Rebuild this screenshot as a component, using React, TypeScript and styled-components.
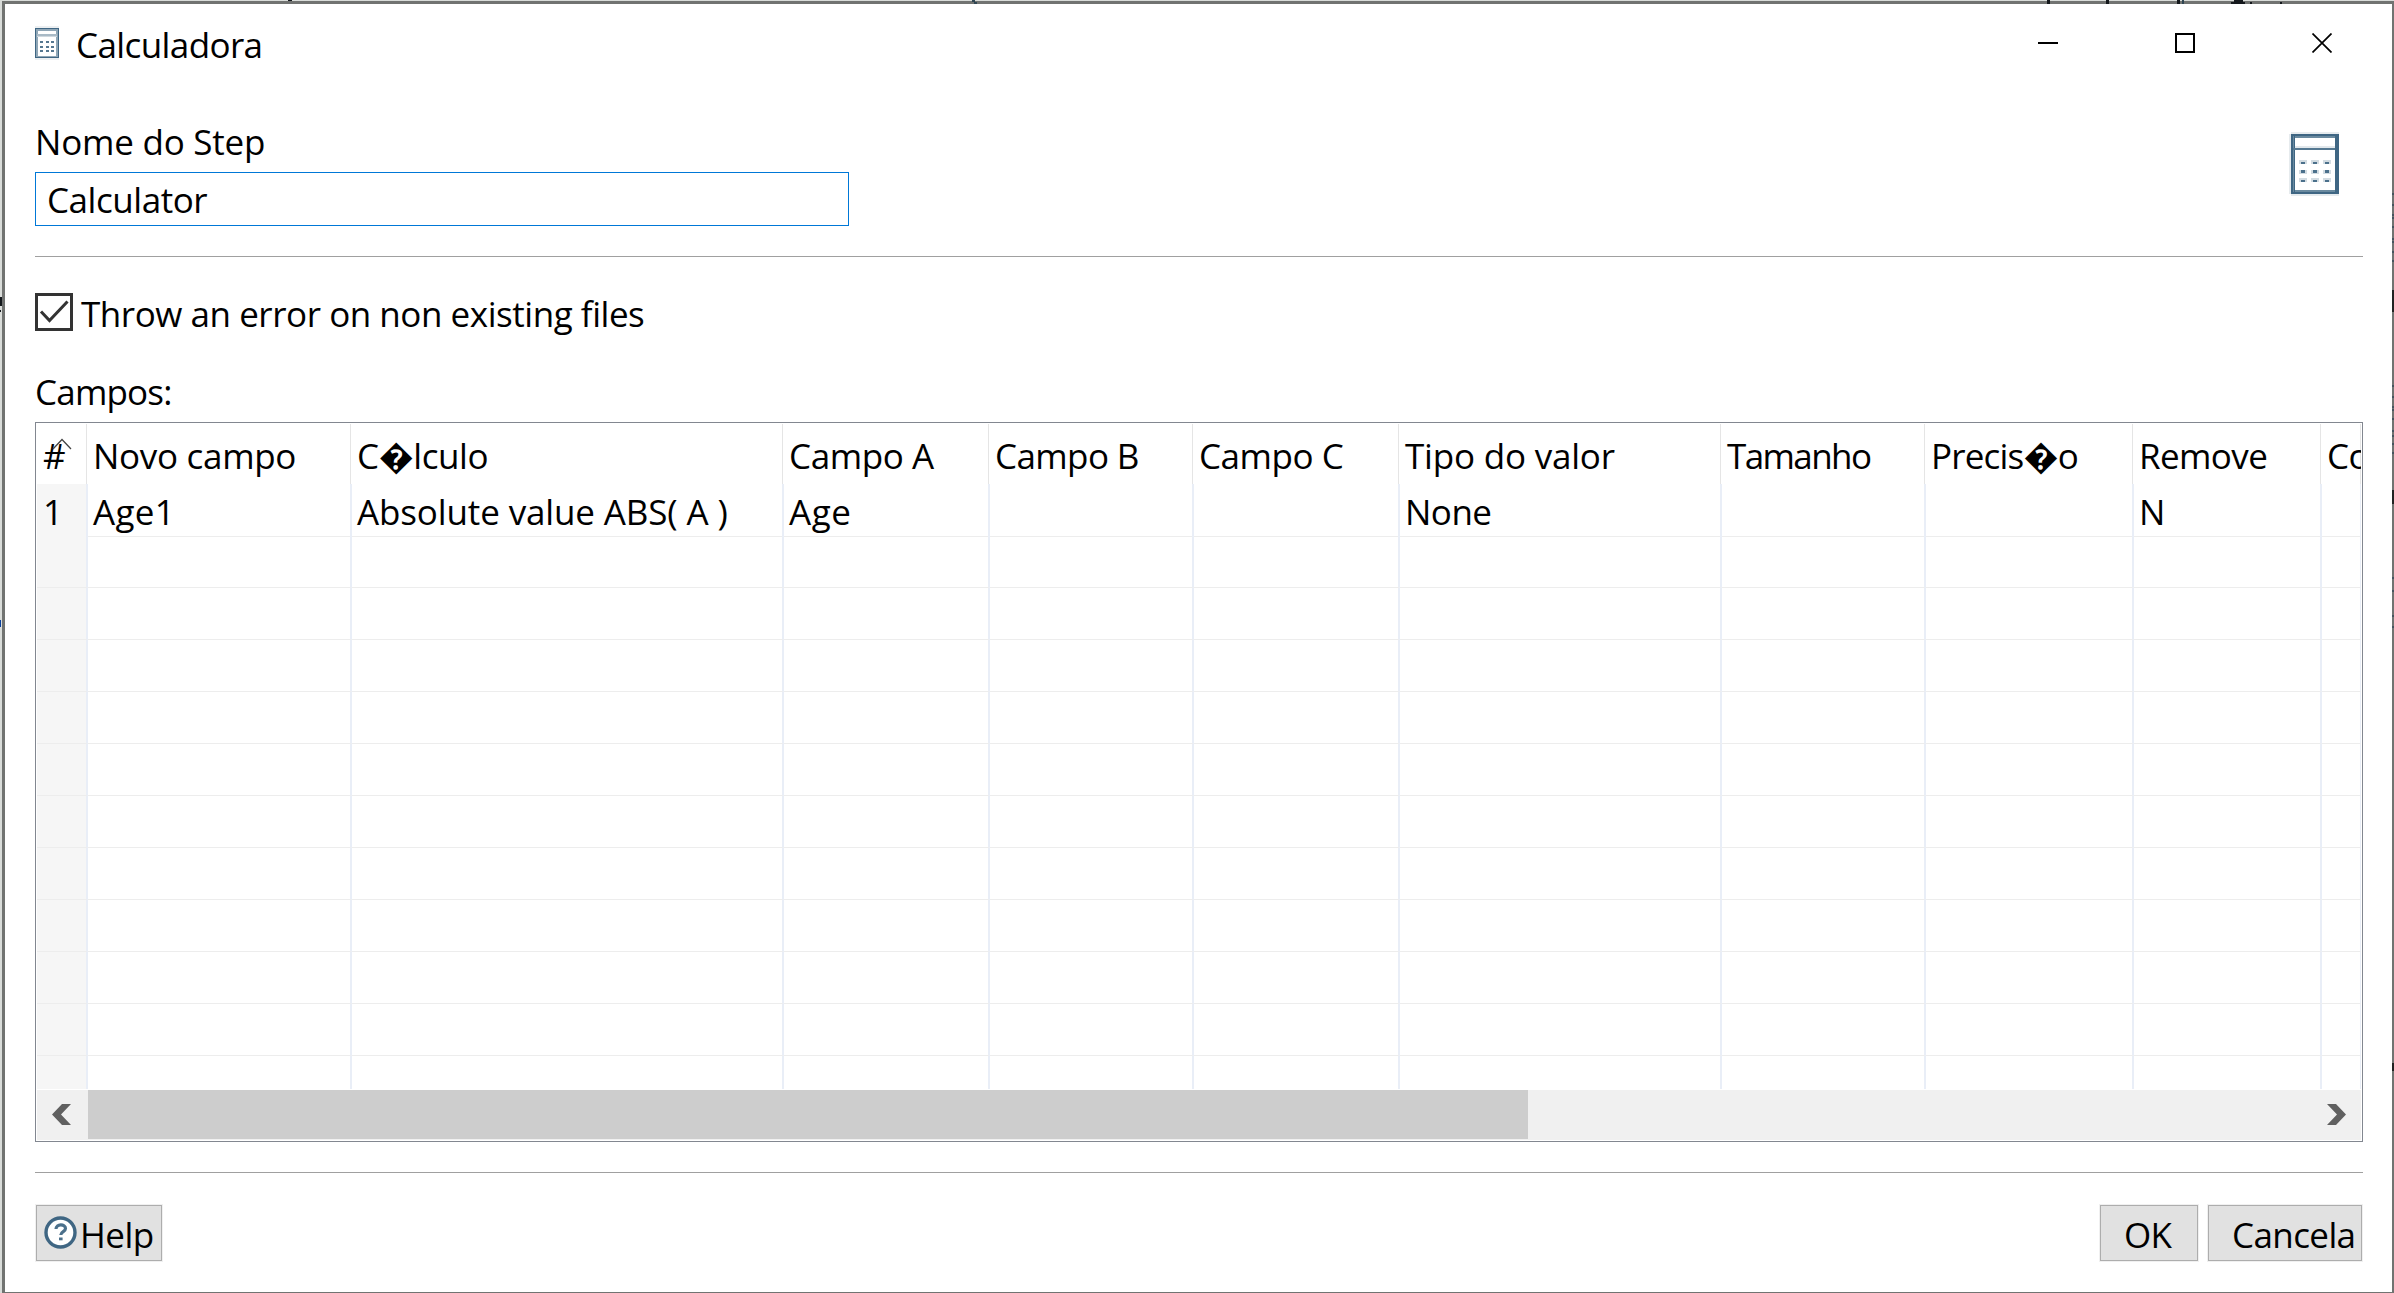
import React from 'react';
import styled, { createGlobalStyle } from 'styled-components';

const GlobalStyle = createGlobalStyle`
  * { box-sizing: border-box; }
  body { margin: 0; background: #d9dcd9; overflow: hidden; }
`;

const Desktop = styled.div`
  position: relative;
  width: 2394px;
  height: 1293px;
  padding: 1px 0 0 2px;
  overflow: hidden;
  background: #d9dcd9;
`;

const EdgeMarks = styled.svg`
  position: absolute;
  left: 0;
  top: 0;
  pointer-events: none;
`;

const Dialog = styled.main`
  display: flex;
  flex-direction: column;
  width: 2392px;
  height: 1292px;
  border: solid #717371;
  border-width: 3px 2px 1px 3px;
  background: #fff;
  color: #000;
  font-family: 'Open Sans', 'Noto Sans', sans-serif;
  font-size: 35px;
  line-height: 48px;
`;

const Label = styled.span<{ $ls?: number }>`
  display: block;
  white-space: pre;
  letter-spacing: ${(p) => p.$ls ?? -0.6}px;
`;

const TitleBar = styled.header`
  display: flex;
  height: 80px;
  padding: 17px 0 0 30px;
`;

const TitleIcon = styled.span`
  width: 24px;
  height: 34px;
  margin: 5px 17px 0 0;
  svg { display: block; }
`;

const WindowControls = styled.div`
  display: flex;
  gap: 117px;
  margin: 12px 60px 0 auto;
  svg { display: block; }
`;

const StepSection = styled.section`
  display: flex;
  justify-content: space-between;
  height: 172px;
  padding: 34px 53px 0 30px;
`;

const Field = styled.label`
  display: flex;
  flex-direction: column;
`;

const Input = styled.div`
  width: 814px;
  height: 54px;
  margin-top: 6px;
  padding: 3px 0 0 11px;
  border: 1px solid #0078d7;
`;

const StepIcon = styled.span`
  margin-top: 14px;
  svg { display: block; }
`;

const Rule = styled.hr<{ $top?: number }>`
  flex: none;
  width: 2328px;
  height: 1px;
  margin: ${(p) => p.$top ?? 0}px 0 0 30px;
  border: 0;
  background: #a0a0a0;
`;

const CheckRow = styled.label`
  display: flex;
  height: 74px;
  margin: 36px 0 0 30px;
`;

const CheckBox = styled.span`
  width: 38px;
  height: 38px;
  margin-right: 8px;
  border: 3px solid #333;
  svg { display: block; }
`;

const CheckText = styled.div`
  margin-top: -3px;
`;

const TableLabel = styled.div`
  height: 55px;
  padding: 1px 0 0 30px;
`;

const TableFrame = styled.div`
  flex: none;
  display: flex;
  flex-direction: column;
  width: 2328px;
  height: 720px;
  margin-left: 30px;
  padding: 1px;
  border: 1px solid #828790;
`;

const HeaderRow = styled.div`
  display: grid;
  flex: none;
  grid-template-columns: 50px 264px 432px 206px 204px 206px 322px 204px 208px 188px 40px;
  height: 60px;
  width: 2324px;
  overflow: hidden;
`;

const HeaderCell = styled.div`
  position: relative;
  padding: 8px 0 0 6px;
  border-right: 1px solid #e5e5e5;
`;

const SortMark = styled.svg`
  position: absolute;
  left: 15px;
  top: 14px;
`;

const Body = styled.div`
  flex: none;
  height: 605px;
  width: 2324px;
  overflow: hidden;
`;

const Row = styled.div`
  display: grid;
  grid-template-columns: 51px 264px 432px 206px 204px 206px 322px 204px 208px 188px 40px;
  height: 52px;
`;

const Cell = styled.div`
  padding: 4px 0 0 5px;
  border-right: 2px solid #e9eef7;
  border-bottom: 1px solid #ededed;
  &:first-child { background: #f6f6f6; padding-left: 6px; }
`;

const ScrollBar = styled.div`
  display: flex;
  justify-content: space-between;
  height: 50px;
  margin-top: 1px;
  background: #f0f0f0;
`;

const ScrollArrow = styled.span<{ $width: number; $left: number }>`
  width: ${(p) => p.$width}px;
  padding: 14px 0 0 ${(p) => p.$left}px;
  svg { display: block; }
`;

const Thumb = styled.span`
  width: 1440px;
  height: 49px;
  margin-right: auto;
  background: #cdcdcd;
`;

const Footer = styled.footer`
  display: flex;
  height: 119px;
  padding: 31px 29px 0 30px;
`;

const Actions = styled.div`
  display: flex;
  gap: 8px;
  margin-left: auto;
`;

const Button = styled.button<{ $w: number; $left: number }>`
  display: flex;
  width: ${(p) => p.$w}px;
  height: 58px;
  margin: 0;
  padding: 6px 0 0 ${(p) => p.$left}px;
  border: 1px solid #f0f0f0;
  background: #e1e1e1;
  box-shadow: inset 0 0 0 1px #adadad;
  color: #000;
  font: inherit;
`;

const HelpIcon = styled.svg`
  flex: none;
  margin: 5px 3px 0 0;
`;

const SmallCalculator = () => (
  <svg width="24" height="34" viewBox="0 0 24 34" shapeRendering="crispEdges">
    <path fill="#eceff1" d="M0 0h24v34H0z" />
    <path fill="#3f6683" d="M0 2h24v30H0z" />
    <path fill="#8fa6b6" d="M1 3h22v28H1z" />
    <path fill="#fff" d="M3 5h18v25H3z" />
    <path fill="#a9bac6" d="M2 8h20v2H2z" />
    <path fill="#cfd8de" d="M2 10h20v1H2z" />
    {[15, 20, 24].map((y) =>
      [5, 11, 16].map((x) => <rect key={`${x}-${y}`} x={x} y={y} width="3" height="1.500" fill="#557790" />),
    )}
  </svg>
);

const LargeCalculator = () => (
  <svg width="50" height="64" viewBox="0 0 50 64" shapeRendering="crispEdges">
    <path fill="#e6ebee" d="M0 2h2v60H0zM2 0h48v64H2z" />
    <path fill="#3f6683" d="M2 2h48v60H2z" />
    <path fill="#6a8a9f" d="M6 4h40v2H6zM6 58h40v2H6zM4 4h1v56H4z" />
    <path fill="#fff" d="M6 6h40v52H6z" />
    <path fill="#e2e8ec" d="M6 14h40v2H6z" />
    <path fill="#557891" d="M4 16h42v2H4z" />
    {[28, 38, 46].map((y) =>
      [10, 22, 34].map((x) => (
        <g key={`${x}-${y}`}>
          <rect x={x} y={y} width="8" height="4" fill="#d3dce2" />
          <rect x={x + 2} y={y + (y === 38 ? 0 : 2)} width="4" height={y === 38 ? 3 : 2} fill="#4b708b" />
        </g>
      )),
    )}
  </svg>
);

const headers: [string, number][] = [
  ['Novo campo', -0.3],
  ['C\uFFFDlculo', -0.4],
  ['Campo A', -0.4],
  ['Campo B', -0.6],
  ['Campo C', -0.45],
  ['Tipo do valor', -0.2],
  ['Tamanho', -1.6],
  ['Precis\uFFFDo', -0.8],
  ['Remove', -0.6],
  ['Co', -0.6],
];

const firstRow: [string, number][] = [
  ['1', 0], ['Age1', 0.3], ['Absolute value ABS( A )', -0.13], ['Age', 0.5], ['', 0],
  ['', 0], ['None', -0.5], ['', 0], ['', 0], ['N', 0], ['', 0],
];

/* Slivers of the window behind that show along the dialog's frame. */
const tickRows = [193, 204, 214, 217, 226, 238, 241, 251, 260, 385, 396, 406, 409, 418, 430, 435, 443, 452, 577, 590, 615, 626];

export default function App() {
  return (
    <>
      <GlobalStyle />
      <Desktop>
        <Dialog>
          <TitleBar>
            <TitleIcon><SmallCalculator /></TitleIcon>
            <Label>Calculadora</Label>
            <WindowControls>
              <svg width="20" height="20"><path d="M0 10h20" stroke="#000" strokeWidth="2" /></svg>
              <svg width="20" height="20"><path d="M1 1h18v18H1z" fill="none" stroke="#000" strokeWidth="2" /></svg>
              <svg width="20" height="20"><path d="M.5.5l19 19M19.5.5l-19 19" stroke="#000" strokeWidth="1.7" /></svg>
            </WindowControls>
          </TitleBar>
          <StepSection>
            <Field>
              <Label $ls={-0.22}>Nome do Step</Label>
              <Input><Label $ls={-0.45}>Calculator</Label></Input>
            </Field>
            <StepIcon><LargeCalculator /></StepIcon>
          </StepSection>
          <Rule />
          <CheckRow>
            <CheckBox>
              <svg width="32" height="32"><path d="M3 15.500l8.500 9L29.500 5.500" fill="none" stroke="#333" strokeWidth="3" /></svg>
            </CheckBox>
            <CheckText><Label $ls={-0.46}>Throw an error on non existing files</Label></CheckText>
          </CheckRow>
          <TableLabel><Label $ls={-0.8}>Campos:</Label></TableLabel>
          <TableFrame>
            <HeaderRow>
              <HeaderCell>
                <Label>#</Label>
                <SortMark width="20" height="12"><path d="M1 11l9-9.500L19 11" fill="none" stroke="#444" strokeWidth="1.300" /></SortMark>
              </HeaderCell>
              {headers.map(([text, ls]) => (
                <HeaderCell key={text}><Label $ls={ls}>{text}</Label></HeaderCell>
              ))}
            </HeaderRow>
            <Body>
              {Array.from({ length: 12 }, (_, r) => (
                <Row key={r}>
                  {firstRow.map(([text, ls], c) => (
                    <Cell key={c}>{r === 0 && text ? <Label $ls={ls}>{text}</Label> : null}</Cell>
                  ))}
                </Row>
              ))}
            </Body>
            <ScrollBar>
              <ScrollArrow $width={51} $left={15}>
                <svg width="19" height="21"><path d="M0 10.500L10 0h9L9 10.500 19 21h-9z" fill="#606060" /></svg>
              </ScrollArrow>
              <Thumb />
              <ScrollArrow $width={50} $left={16}>
                <svg width="19" height="21"><path d="M19 10.500L9 0H0l10 10.500L0 21h9z" fill="#606060" /></svg>
              </ScrollArrow>
            </ScrollBar>
          </TableFrame>
          <Rule $top={30} />
          <Footer>
            <Button $w={128} $left={8}>
              <HelpIcon width="33" height="33" viewBox="0 0 33 33">
                <circle cx="16.500" cy="16.500" r="14.500" fill="#fff" stroke="#3f6683" strokeWidth="3.400" />
                <path d="M12 13c0-5.500 9.500-5.500 9.500-.5 0 3.200-4.700 3-4.700 6.500" fill="none" stroke="#4b708b" strokeWidth="3.200" />
                <path d="M15 21.500h3.600v2.800H15z" fill="#4b708b" />
              </HelpIcon>
              <Label $ls={-0.5}>Help</Label>
            </Button>
            <Actions>
              <Button $w={100} $left={24}><Label $ls={-0.8}>OK</Label></Button>
              <Button $w={156} $left={24}><Label>Cancela</Label></Button>
            </Actions>
          </Footer>
        </Dialog>
        <EdgeMarks width="2394" height="1293" shapeRendering="crispEdges">
          <path fill="#14181c" d="M288 0h4v1h-4zM2047 0h3v4h-3zM2106 0h3v4h-3zM2177 0h3v4h-3zM2231 2h14v2h-14zM2234 0h9v2h-9zM2250 2h2v2h-2zM2280 2h2v2h-2zM0 297h2v9H0zM0 310h1v2H0z" />
          <path fill="#2f4552" d="M972 0h3v2h-3zM974 2h3v2h-3zM2182 0h2v4h-2z" />
          <path fill="#0a3f9c" d="M0 620h1v7H0z" />
          {tickRows.map((y) => <rect key={y} x="2392" y={y} width="2" height="2" fill="#46545f" />)}
          <path fill="#222" d="M2392 290h2v22h-2zM2392 490h2v14h-2zM2392 1063h2v8h-2z" />
        </EdgeMarks>
      </Desktop>
    </>
  );
}
